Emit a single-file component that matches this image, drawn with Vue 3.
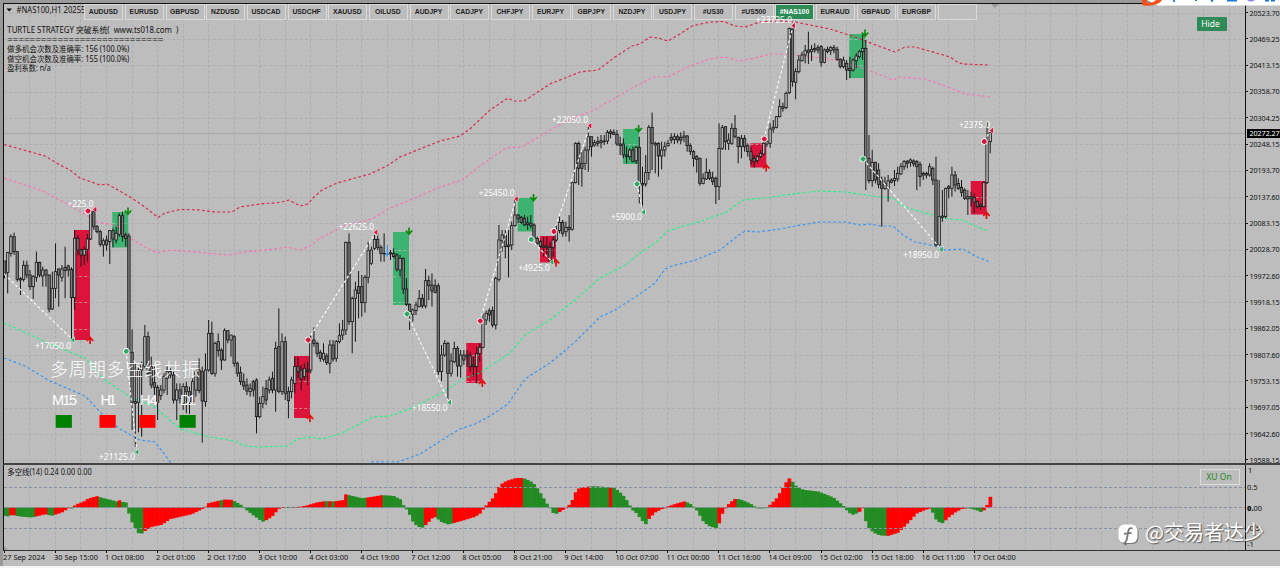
<template>
  <div class="terminal">
    <div class="chart-row">
      <svg class="plot" width="1241" height="459" viewBox="4 4 1241 459">
        <g class="grid">
          <line v-for="x in gridX" :key="'x' + x" :x1="x" :x2="x" y1="4" y2="463" />
          <line v-for="y in gridY" :key="'y' + y" :y1="y" :y2="y" x1="4" x2="1245" />
        </g>

        <line class="price-line" x1="4" x2="1245" y1="133.5" y2="133.5" />

        <g v-for="(b, i) in boxes" :key="'b' + i">
          <rect :x="b[1]" :y="b[2]" :width="16" :height="b[3] - b[2]" :class="b[0] === 'buy' ? 'box-red' : 'box-green'" />
          <line
            v-for="y in gridY.filter(g => g > b[2] && g < b[3])"
            :key="y"
            class="box-grid"
            :x1="b[1]"
            :x2="b[1] + 16"
            :y1="y"
            :y2="y"
          />
        </g>

        <polyline v-for="band in bands" :key="band.color" class="band" :points="band.points" :stroke="band.color" />

        <g v-for="(c, i) in candles" :key="'c' + i" :class="['candle', c.up ? 'up' : 'down', { blue: i === 120 }]">
          <line :x1="c.x" :x2="c.x" :y1="c.high" :y2="c.low" />
          <rect :x="c.x - 1.2" :y="c.top" width="2.4" :height="c.height" />
        </g>

        <line v-for="(t, i) in trades" :key="'t' + i" class="trade" :x1="t[0]" :y1="t[1]" :x2="t[2]" :y2="t[3]" />

        <path
          v-for="(a, i) in arrows"
          :key="'a' + i"
          :class="a[0]"
          :transform="`translate(${a[1]} ${a[2]})${a[0] === 'arrow-down' ? ' rotate(180)' : ''}`"
          d="M0 4V-3M-3.2 1L0 -2.6L3.2 1"
        />
        <path
          v-for="(d, i) in entries"
          :key="'d' + i"
          :class="['entry', d[0]]"
          :transform="`translate(${d[1]} ${d[2]})`"
          d="M-.8 -2.4H.8L2.4 -.8V.8L.8 2.4H-.8L-2.4 .8V-.8Z"
        />
        <path
          v-for="(e, i) in exits"
          :key="'e' + i"
          :class="['exit', e[0]]"
          :transform="`translate(${e[1]} ${e[2]})`"
          d="M-2.2 0L1.5 -3V3Z"
        />

        <path d="M6.5 8.5H12L9.2 11.6Z" fill="#111" />
        <path d="M991 4H999L995 8Z" fill="#999" />
        <text class="info" x="16.5" y="13" textLength="69" lengthAdjust="spacingAndGlyphs">#NAS100,H1  20255</text>
        <text
          v-for="line in info"
          :key="line[0]"
          class="info"
          x="7.3"
          :y="line[2]"
          :textLength="line[1]"
          lengthAdjust="spacingAndGlyphs"
        >{{ line[0] }}</text>

        <text class="resonance" x="50" y="375.5" textLength="150">多周期多空线共振</text>
        <g v-for="s in signals" :key="s[0]">
          <text class="period" :x="s[1]" y="405" :textLength="s[2]">{{ s[0] }}</text>
          <rect :x="s[3]" y="415" width="16.2" height="12.8" :fill="s[4]" />
        </g>
      </svg>

      <div class="price-axis">
        <span v-for="p in prices" :key="p">{{ p }}</span>
        <b class="price-tag">20272.27</b>
      </div>

      <div class="symbols">
        <button v-for="s in symbols" :key="s" :class="{ active: s === '#NAS100' }">{{ s }}</button>
      </div>

      <svg class="overlay" width="1241" height="459" viewBox="4 4 1241 459">
        <text
          v-for="p in profits"
          :key="p[0]"
          class="profit"
          :x="p[1]"
          :y="p[3] + 3"
          :textLength="p[2] - p[1]"
          lengthAdjust="spacingAndGlyphs"
        >{{ p[0] }}</text>
      </svg>
      <button class="hide-btn">Hide</button>
    </div>

    <div class="indicator-row">
      <svg class="plot" width="1241" height="85" viewBox="4 465 1241 85">
        <g class="grid">
          <line v-for="x in gridX" :key="x" :x1="x" :x2="x" y1="465" y2="550" />
        </g>
        <rect
          v-for="(h, i) in histogram"
          :key="i"
          :x="h.x"
          :y="h.y"
          width="3.7"
          :height="h.height"
          :fill="h.color"
        />
        <line v-for="y in [487.5, 507.5, 528.5]" :key="y" class="level" x1="4" x2="1245" :y1="y" :y2="y" />
        <text class="info" x="7.3" y="474.5" textLength="84.5" lengthAdjust="spacingAndGlyphs">多空线(14) 0.24 0.00 0.00</text>
        <path d="M4 546L8 550H4Z" fill="#999" />
      </svg>
      <div class="level-axis">
        <span class="one">1</span>
        <span class="half">0.5</span>
        <span class="zero">0.00</span>
        <span class="minus-half">-0.5</span>
        <span class="minus-one">-1</span>
      </div>
      <button class="xu-btn">XU On</button>
    </div>

    <div class="time-axis">
      <span v-for="t in times" :key="t">{{ t }}</span>
    </div>

    <div class="floating-bar">
      <svg width="138" height="6" viewBox="0 0 138 6">
        <path d="M5 0H138V5.6H16Z" fill="#fff" />
        <path d="M0 0C0 3 0 5.5 2 5.7C9 6 17 5 20 0H14C11 3 8 3 5 2.5V0Z" fill="#f4511e" />
        <path d="M32 0V2M53 0H55M69 0L71 1.5M85 .5H95" stroke="#1e78d6" stroke-width="1.8" />
        <path d="M105 0Q109 3 113 0Z" fill="#8a84f5" />
        <path d="M123 0H127V1.5H123ZM129 0H133V1.5H129Z" fill="#1976d2" />
      </svg>
    </div>

    <div class="watermark">
      <svg width="20" height="21" viewBox="0 0 20 21">
        <rect x=".5" y=".5" width="19" height="18.5" rx="6" fill="#fff" />
        <path d="M14.5 4.3C11.3 3.6 10.5 5.4 10.1 8L9.2 13.5C8.8 16.5 8 18.5 5.7 20M6 9.8L13.5 8.8" fill="none" stroke="#777" stroke-width="1.8" />
      </svg>
      <span>@交易者达少</span>
    </div>
  </div>
</template>

<script setup>
const STEP = 3.19
const X0 = 4.5

const symbols = [
  'AUDUSD', 'EURUSD', 'GBPUSD', 'NZDUSD', 'USDCAD', 'USDCHF', 'XAUUSD', 'OILUSD', 'AUDJPY', 'CADJPY', 'CHFJPY',
  'EURJPY', 'GBPJPY', 'NZDJPY', 'USDJPY', '#US30', '#US500', '#NAS100', 'EURAUD', 'GBPAUD', 'EURGBP', ''
]
const prices = [
  '20523.70', '20469.25', '20413.15', '20358.70', '20304.25', '20248.15', '20193.70', '20137.60', '20083.15',
  '20028.70', '19972.60', '19918.15', '19862.05', '19807.60', '19753.15', '19697.05', '19642.60', '19588.15'
]
const times = [
  '27 Sep 2024', '30 Sep 15:00', '1 Oct 08:00', '2 Oct 01:00', '2 Oct 17:00', '3 Oct 10:00', '4 Oct 03:00',
  '4 Oct 19:00', '7 Oct 12:00', '8 Oct 05:00', '8 Oct 21:00', '9 Oct 14:00', '10 Oct 07:00', '11 Oct 00:00',
  '11 Oct 16:00', '14 Oct 09:00', '15 Oct 02:00', '15 Oct 18:00', '16 Oct 11:00', '17 Oct 04:00'
]
// text, width, baseline
const info = [
  ['TURTLE STRATEGY 突破系统(  www.ts018.com  )', 171, 33],
  ['============================', 156, 43],
  ['做多机会次数及准确率: 156 (100.0%)', 122, 52],
  ['做空机会次数及准确率: 155 (100.0%)', 122, 61.5],
  ['盈利系数: n/a', 43.5, 71]
]
const signals = [
  ['M15', 52, 25, 55.7, '#008000'],
  ['H1', 100.5, 16, 99.5, '#ff0000'],
  ['H4', 140, 17.5, 139.3, '#ff0000'],
  ['D1', 180, 16, 179.5, '#008000']
]

const gridX = Array.from({ length: 48 }, (_, i) => Math.floor(4.4 + 25.52 * (i + 1)) + 0.5)
const gridY = Array.from({ length: 18 }, (_, i) => Math.round(12.7 + 26.32 * i) + 0.5)

const boxes = [
  ['buy', 74, 230, 340], ['sell', 112.3, 212, 247.5], ['buy', 294, 356, 418], ['sell', 393, 232, 305],
  ['buy', 466.3, 343, 383], ['sell', 517.7, 198, 231.5], ['buy', 540, 236, 262.5], ['sell', 623, 129, 164],
  ['buy', 750.3, 143.3, 167.5], ['sell', 849.3, 34, 78], ['buy', 970.7, 181, 214.5]
]
const arrows = [
  ['arrow-down', 128, 211.5], ['arrow-down', 409, 231.5], ['arrow-down', 533.5, 198], ['arrow-down', 638.7, 129],
  ['arrow-down', 865, 33.5], ['arrow-up', 90, 340], ['arrow-up', 310, 418], ['arrow-up', 482.3, 383],
  ['arrow-up', 556, 262.5], ['arrow-up', 766.2, 167.5], ['arrow-up', 986.5, 215]
]
const entries = [
  ['red', 88, 211], ['red', 308.2, 340], ['red', 480.3, 321], ['red', 554, 231.5], ['red', 764.3, 139],
  ['red', 984.3, 141.5], ['green', 126.3, 351.3], ['green', 407, 314], ['green', 531.3, 239.5],
  ['green', 637, 184], ['green', 863, 159]
]
const exits = [
  ['red', 95, 209.5], ['red', 376, 232.3], ['red', 516.3, 199], ['red', 590, 125.7], ['red', 793.5, 25.7],
  ['red', 991.7, 130.5], ['green', 73, 340], ['green', 137, 452], ['green', 449.5, 402.5], ['green', 552, 262.3],
  ['green', 643.5, 212], ['green', 941.3, 249.5]
]
const trades = [
  [4, 274, 73, 340], [126, 351, 137, 452], [308, 340, 376, 232], [407, 314, 449, 402], [480, 321, 516, 199],
  [531, 239, 552, 262], [554, 231, 590, 126], [637, 184, 643, 212], [764, 139, 793, 26], [863, 159, 941, 249],
  [984, 141, 991, 130]
]
const profits = [
  ['+225.0', 67.5, 93.5, 203.7], ['+17050.0', 35, 71, 345.5], ['+21125.0', 99, 135, 457], ['+22625.0', 338.5, 374, 226.7],
  ['+18550.0', 412, 447.5, 407.7], ['+25450.0', 478.7, 514.5, 193.3], ['+4925.0', 518.3, 550, 268],
  ['+22050.0', 552, 588, 119.7], ['+5900.0', 611, 642, 217], ['+23725.0', 756, 792, 20], ['+2375.0', 959, 990, 124.7],
  ['+18950.0', 903, 939, 254.7]
]

const bands = [
  {
    color: '#dc143c',
    points: '4,144.5 20,149 45,156 60,165 70,170 80,178 100,185 107,184 118,190 130,197 145,207 158,217.5 165,213 180,209.5 200,210 215,212 232,212 240,207 260,204 280,202.5 289,200 300,206 308,204 313,198 322,190 337,183 370,174 387,166 400,157 425,147 440,141 460,136 470,129 490,110 508,98 514,101 524,101 550,84 580,72 598,70 615,57 632,46 640,44 650,37 658,38 668,41 680,34 692,26 710,22 724,21.5 735,26 745,27 760,22 780,21 795,22 830,29 855,37 873,44 895,52 905,47 915,47 940,54 950,57 957,62 963,64 988,65'
  },
  {
    color: '#ff69b4',
    points: '4,178 25,185 45,192 57,199 70,205 97,222 115,225 130,238 145,247 157,253 170,250 195,252 215,254 230,255 245,252 275,249 287,247 300,250 310,246 320,238 330,233 345,225 360,222 372,219 390,208 415,198 440,187 462,180 480,166 506,148 522,147 550,130 575,117 590,112 610,101 630,89 640,84 653,77 668,77 690,66 710,59 725,57 740,61 755,58 770,54 790,54 805,56 835,60 850,64 870,71 893,80 900,77 925,79 945,86 965,94 975,95 990,97'
  },
  {
    color: '#00ff7f',
    points: '4,323 20,330 45,342 85,358 105,380 130,397 155,407 165,416 180,429 210,437 235,441 245,446 260,447 288,446 297,439 310,437 322,439 340,434 373,417 390,416 412,408 440,394 465,378 480,373 510,353 525,335 550,320 575,300 600,278 625,265 640,253 655,243 668,231 680,227 695,223 725,213 743,200 765,198 800,193 820,191 845,192 880,197 893,198 905,207 940,217 950,219 963,220 975,226 988,231'
  },
  {
    color: '#1e90ff',
    points: '4,358 25,366 50,381 85,396 105,417 120,429 140,440 155,442 165,455 171,463'
  },
  {
    color: '#1e8fff',
    points: '371,462 398,462 420,454 445,438 460,429 475,424 490,416 508,404 525,379 550,363 575,342 600,317 615,310 640,294 655,283 665,269 675,265 693,261 720,250 735,238 745,231 758,232 780,229 795,226 820,222 845,222 860,225 870,224 880,226 893,226 903,235 915,242 940,247 945,250 963,249 975,256 990,262'
  }
]

// Each bar is [high, open, close, low] in thirds of a pixel below the segment base
const segments = [
  {
    base: 570,
    bars: [
      [213, 213, 255, 265], [187, 247, 187, 310], [133, 190, 140, 200], [128, 140, 185, 195], [183, 185, 268, 275],
      [262, 266, 270, 315], [212, 268, 226, 275], [212, 226, 255, 265], [240, 255, 290, 300], [255, 290, 260, 327],
      [185, 262, 217, 275], [215, 217, 255, 262], [230, 258, 240, 290], [238, 240, 255, 290], [253, 255, 357, 367],
      [245, 357, 295, 360], [160, 295, 245, 325], [235, 237, 255, 350], [225, 262, 237, 275], [170, 232, 242, 325],
      [224, 228, 240, 260], [232, 238, 323, 450], [120, 323, 145, 360], [135, 145, 180, 195], [175, 180, 195, 230],
      [170, 195, 178, 225], [132, 178, 147, 215], [62, 147, 65, 150], [62, 65, 110, 120], [105, 110, 125, 130],
      [120, 125, 163, 170], [145, 165, 152, 200], [137, 150, 165, 182], [120, 155, 122, 222], [115, 122, 147, 172],
      [110, 150, 130, 160], [70, 133, 77, 140], [65, 77, 140, 155], [128, 135, 145, 170], [130, 138, 487, 490],
      [418, 487, 637, 720], [520, 635, 640, 770], [530, 637, 540, 727], [515, 540, 525, 740], [405, 530, 440, 535],
      [425, 440, 550, 560], [500, 530, 585, 595], [530, 578, 592, 620], [585, 592, 637, 690], [585, 617, 600, 630],
      [550, 600, 560, 610], [530, 565, 545, 615], [535, 545, 555, 565], [545, 555, 630, 640], [580, 630, 600, 690],
      [580, 600, 625, 640], [580, 640, 590, 660], [575, 590, 605, 670], [590, 605, 635, 672], [565, 635, 575, 645],
      [540, 600, 545, 620], [505, 540, 602, 610], [530, 545, 633, 758], [490, 635, 540, 650], [390, 540, 430, 545],
      [395, 430, 550, 555], [455, 550, 460, 560], [430, 455, 482, 500], [475, 480, 510, 540], [415, 510, 422, 512],
      [420, 422, 450, 460], [435, 450, 435, 500], [435, 440, 520, 530], [515, 520, 550, 560], [530, 548, 575, 585],
      [550, 575, 588, 600], [565, 585, 603, 615], [580, 605, 595, 620], [570, 575, 600, 620], [565, 570, 680, 730],
      [620, 680, 640, 685], [590, 640, 620, 655], [570, 595, 630, 645], [560, 600, 570, 610], [545, 565, 600, 610],
      [455, 600, 475, 665], [355, 470, 605, 610], [430, 605, 455, 615], [440, 455, 610, 630], [590, 605, 632, 685],
      [560, 605, 570, 625], [500, 580, 530, 610], [500, 530, 545, 565], [525, 540, 567, 600], [520, 560, 535, 570],
      [515, 540, 545, 585], [435, 540, 450, 550], [412, 450, 460, 470], [455, 460, 490, 500], [480, 487, 505, 515],
      [460, 508, 490, 515], [490, 498, 518, 525], [450, 520, 465, 550], [450, 465, 507, 515], [450, 505, 455, 515],
      [400, 455, 437, 460], [390, 435, 420, 450], [155, 420, 157, 435], [130, 157, 395, 405], [320, 395, 325, 490],
      [275, 325, 300, 455], [243, 290, 310, 385], [255, 290, 338, 380], [255, 338, 262, 368], [155, 262, 182, 280],
      [170, 220, 180, 225], [135, 175, 148, 180], [130, 148, 172, 180], [165, 172, 190, 215], [130, 190, 192, 215],
      [165, 192, 194, 200], [180, 188, 192, 210], [175, 190, 200, 205], [190, 195, 238, 245], [195, 240, 205, 262],
      [203, 205, 297, 312], [265, 297, 343, 348], [340, 343, 365, 420], [355, 373, 360, 395], [335, 362, 345, 375],
      [300, 350, 325, 352], [312, 325, 348, 355], [237, 348, 272, 355], [257, 272, 287, 330], [250, 285, 303, 350],
      [268, 287, 307, 310], [280, 287, 545, 555], [465, 545, 495, 573], [450, 495, 460, 500], [455, 460, 550, 630],
      [490, 550, 513, 560], [455, 515, 475, 520], [468, 475, 528, 560], [480, 528, 495, 563], [480, 495, 510, 525],
      [480, 495, 500, 530], [485, 497, 530, 545], [500, 525, 530, 560], [470, 530, 490, 580], [460, 490, 472, 515],
      [370, 472, 390, 475], [362, 390, 370, 405], [355, 362, 375, 395], [350, 362, 405, 412], [260, 405, 265, 418],
      [105, 268, 150, 275], [120, 152, 135, 185], [120, 135, 170, 205], [120, 165, 170, 262], [95, 165, 107, 180],
      [30, 107, 75, 110], [72, 75, 85, 100], [78, 82, 97, 102], [75, 85, 105, 108], [80, 98, 103, 120],
      [75, 100, 107, 115], [100, 105, 145, 150], [140, 145, 160, 165], [150, 155, 170, 175], [140, 168, 172, 200],
      [140, 168, 172, 200], [155, 172, 212, 215], [140, 172, 150, 200], [100, 150, 122, 155], [80, 122, 97, 130],
      [90, 97, 130, 140], [95, 125, 112, 140], [75, 112, 118, 155], [-25, 118, -22, 122]
    ]
  },
  {
    base: 0,
    bars: [
      [427, 548, 430, 550], [425, 430, 505, 555], [450, 490, 505, 560], [440, 490, 450, 510], [380, 450, 410, 515],
      [410, 410, 440, 470], [420, 435, 428, 440], [410, 425, 430, 440], [405, 422, 428, 445], [405, 423, 425, 435],
      [390, 423, 397, 432], [388, 395, 400, 415], [388, 397, 403, 405], [390, 403, 432, 438], [410, 432, 437, 465],
      [415, 432, 465, 475], [440, 465, 470, 490], [445, 470, 450, 480], [440, 450, 485, 487], [438, 482, 442, 492],
      [410, 442, 550, 610], [500, 550, 555, 622], [465, 552, 518, 560], [375, 518, 382, 540], [338, 382, 430, 510],
      [425, 430, 435, 520], [427, 430, 468, 530], [425, 468, 450, 508], [425, 450, 440, 470], [420, 437, 430, 440],
      [400, 412, 420, 430], [400, 418, 410, 432], [403, 410, 420, 430], [397, 412, 420, 433], [393, 412, 408, 427],
      [405, 408, 437, 455], [430, 437, 455, 465], [450, 455, 475, 500], [465, 470, 478, 518], [473, 475, 550, 557],
      [520, 550, 535, 553], [475, 537, 517, 540], [508, 517, 535, 540], [515, 533, 545, 555], [530, 535, 560, 612],
      [370, 560, 445, 600], [375, 445, 383, 450], [380, 380, 425, 450], [400, 430, 420, 450], [370, 430, 385, 435],
      [345, 385, 410, 415], [410, 412, 440, 490], [405, 440, 415, 475], [405, 415, 440, 455], [430, 437, 455, 470],
      [440, 455, 480, 495], [465, 475, 485, 503], [465, 482, 470, 490], [450, 470, 460, 475], [415, 462, 430, 465],
      [415, 432, 425, 440], [370, 430, 387, 443], [360, 387, 382, 398], [348, 382, 350, 385], [298, 350, 320, 352],
      [308, 320, 325, 335], [275, 323, 280, 328], [83, 278, 85, 282], [80, 87, 245, 260], [205, 247, 215, 298],
      [165, 215, 180, 220], [155, 182, 165, 185], [135, 165, 152, 190], [95, 150, 157, 192], [135, 155, 148, 183],
      [130, 145, 150, 158], [135, 143, 150, 160], [135, 140, 187, 200], [145, 187, 150, 190], [140, 148, 155, 160],
      [138, 152, 143, 165], [135, 143, 150, 160], [140, 148, 178, 182], [175, 178, 200, 205], [170, 200, 180, 205],
      [180, 190, 210, 240], [170, 205, 212, 235], [175, 210, 180, 215], [160, 182, 168, 205], [150, 170, 155, 175],
      [105, 155, 145, 180], [120, 145, 475, 570], [405, 475, 542, 550], [450, 542, 487, 560], [485, 487, 540, 550],
      [490, 510, 553, 565], [530, 540, 565, 680], [530, 565, 550, 570], [525, 565, 543, 605], [535, 540, 547, 550],
      [510, 542, 535, 558], [500, 537, 520, 545], [490, 522, 500, 525], [480, 500, 485, 510], [480, 484, 490, 505],
      [475, 487, 480, 500], [478, 483, 492, 500], [480, 485, 500, 570], [485, 493, 530, 560], [515, 520, 525, 540],
      [515, 525, 520, 535], [490, 525, 500, 530], [500, 505, 540, 555], [470, 540, 735, 740], [540, 735, 650, 742],
      [570, 648, 652, 665], [563, 650, 565, 655], [555, 560, 565, 595], [500, 565, 525, 590], [513, 525, 555, 575],
      [535, 550, 565, 570], [540, 562, 577, 590], [565, 570, 595, 600], [570, 590, 597, 645], [575, 590, 595, 620],
      [580, 592, 607, 640], [600, 605, 620, 625], [610, 615, 620, 630], [545, 620, 548, 622], [365, 548, 425, 552],
      [390, 425, 397, 460]
    ]
  }
]

const candles = segments
  .flatMap(s => s.bars.map(bar => bar.map(v => (v + s.base) / 3)))
  .map(([high, open, close, low], i) => ({
    x: +(X0 + STEP * i).toFixed(2),
    high,
    low,
    top: Math.min(open, close),
    height: Math.max(Math.abs(open - close), 0.6),
    up: close < open
  }))

// Oscillator outline: position and value, thirds of a pixel
const profile = [
  13, -25, 25, -27, 35, -22, 60, -27, 95, -30, 120, -24, 135, -20, 155, -25, 185, -15, 205, -2, 215, -3, 222, 5,
  235, 12, 250, 17, 265, 27, 290, 34, 310, 28, 335, 22, 350, 18, 357, 22, 365, 17, 378, 15, 384, -10, 395, -42,
  405, -60, 415, -77, 427, -78, 435, -70, 455, -58, 485, -52, 510, -35, 540, -28, 575, -20, 600, -8, 615, 0,
  622, 12, 650, 19, 675, 24, 695, 23, 710, 15, 730, 3, 740, -8, 755, -20, 780, -38, 790, -43, 815, -28, 835, -5,
  845, 1, 900, 2, 920, 6, 950, 15, 975, 19, 1000, 18, 1028, 22, 1034, 40, 1060, 34, 1085, 28, 1110, 31, 1145, 37,
  1180, 35, 1200, 25, 1212, 3, 1225, -12, 1235, -38, 1250, -55, 1265, -62, 1280, -50, 1295, -33, 1308, -28,
  1320, -42, 1345, -51, 1385, -40, 1425, -28, 1440, -18, 1452, -2, 1460, 8, 1480, 30, 1490, 48, 1500, 68,
  1520, 80, 1550, 89, 1570, 88, 1590, 80, 1605, 68, 1620, 45, 1640, 12, 1650, -2, 1657, -15, 1667, -20, 1685, -10,
  1700, 2, 1710, 10, 1720, 28, 1730, 55, 1750, 61, 1780, 64, 1820, 61, 1840, 60, 1855, 50, 1870, 35, 1885, 15,
  1895, -6, 1910, -18, 1925, -38, 1937, -50, 1948, -32, 1965, -15, 1990, -2, 2000, 2, 2030, 12, 2055, 19, 2075, 8,
  2088, -5, 2100, -25, 2110, -42, 2125, -55, 2150, -63, 2157, -48, 2166, -20, 2178, 0, 2190, 15, 2207, 27,
  2225, 23, 2250, 12, 2265, 2, 2280, -3, 2300, 0, 2315, 12, 2330, 28, 2348, 58, 2366, 89, 2375, 80, 2390, 62,
  2410, 53, 2455, 48, 2475, 40, 2500, 30, 2530, 5, 2545, -15, 2560, -22, 2580, -12, 2588, -2, 2595, -35,
  2605, -60, 2620, -75, 2640, -84, 2665, -85, 2695, -75, 2720, -50, 2750, -18, 2775, -7, 2795, -2, 2802, -30,
  2815, -43, 2828, -47, 2845, -30, 2865, -15, 2885, -4, 2905, -2, 2930, -8, 2945, -15, 2950, -12, 2958, 7,
  2963, 8, 2970, 32, 2980, 32
]
// Colour flips between falling (green) and rising (red) at each position
const flips = [
  25, 45, 103, 142, 161, 205, 219, 295, 352, 361, 429, 657, 667, 697, 792, 865, 880, 975, 984, 993, 1002, 1041,
  1097, 1145, 1270, 1308, 1356, 1566, 1672, 1767, 1825, 1835, 1940, 2056, 2151, 2208, 2305, 2370, 2571, 2590,
  2658, 2790, 2831, 2895, 2945
]

function valueAt(x) {
  for (let i = 2; i < profile.length; i += 2) {
    if (x <= profile[i]) {
      const t = (x - profile[i - 2]) / (profile[i] - profile[i - 2])
      return profile[i - 1] + t * (profile[i + 1] - profile[i - 1])
    }
  }
  return profile[profile.length - 1]
}

const histogram = candles.map(c => {
  const x = Math.max(c.x * 3, 13)
  const v = valueAt(x) / 3
  const flipped = flips.filter(f => f <= x).length
  return {
    x: c.x - 1.7,
    y: v > 0 ? 507.5 - v : 507.5,
    height: Math.max(Math.abs(v), 0.8),
    color: flipped % 2 ? '#ff0000' : '#228b22'
  }
})
</script>

<style>
body {
  margin: 0;
  background: #fff;
}
</style>

<style scoped>
.terminal {
  position: relative;
  box-sizing: border-box;
  width: 1280px;
  height: 568px;
  padding: 3px 0 0 3px;
  overflow: hidden;
  background: #bdbdbd;
  border-bottom: 2px solid #f4f4f4;
  font-family: 'Noto Sans', 'Noto Sans CJK SC', sans-serif;
  color: #111;
  box-shadow: inset 3px 3px 0 #999;
}
.plot {
  display: block;
  flex: none;
  border-right: 1px solid #111;
}
.overlay {
  position: absolute;
  top: 0;
  left: 0;
  pointer-events: none;
}
.chart-row {
  position: relative;
  display: flex;
  height: 459px;
  border-top: 1px solid #111;
  border-left: 1px solid #111;
  border-bottom: 2px solid #444;
}
.grid line {
  stroke: #aeaeae;
  stroke-width: 1;
  stroke-dasharray: 3 2.1;
}
.box-red { fill: #dc143c; }
.box-green { fill: #3cb371; }
.box-grid {
  stroke: #ccc;
  stroke-width: 0.8;
  stroke-dasharray: 3 2.1;
  opacity: 0.7;
}
.band {
  fill: none;
  stroke-width: 1.15;
  stroke-dasharray: 2.8 2.3;
  opacity: 0.88;
}
.candle line {
  stroke: #161616;
  stroke-width: 1;
}
.candle rect {
  stroke: #161616;
  stroke-width: 0.8;
}
.candle.up rect { fill: #b4b4b4; }
.candle.down rect { fill: #777; }
.candle.blue line,
.candle.blue rect { stroke: #1e90ff; }
.price-line { stroke: #a8a8a8; stroke-width: 1; }
.trade {
  stroke: #fff;
  stroke-width: 1.1;
  stroke-dasharray: 3 2.2;
}
.arrow-down,
.arrow-up {
  fill: none;
  stroke-width: 1.7;
}
.arrow-down { stroke: #0a8c0a; }
.arrow-up { stroke: #e01010; }
.entry,
.exit {
  stroke: #fff;
  stroke-width: 1.8;
  paint-order: stroke;
}
.exit { stroke-width: 1; }
.red { fill: #dc143c; }
.green { fill: #2ea866; }
.profit {
  font-size: 8.8px;
  fill: #fff;
}
.info {
  font-size: 8px;
  fill: #111;
  white-space: pre;
}
.resonance {
  font-family: 'Noto Sans CJK SC', sans-serif;
  font-weight: 300;
  font-size: 18px;
  fill: #fff;
}
.period {
  font-family: 'Liberation Sans', Arial, sans-serif;
  font-size: 14.5px;
  fill: #fff;
}
.price-axis {
  position: relative;
  display: flex;
  flex-direction: column;
  justify-content: space-between;
  height: 461px;
  padding: 3.5px 0 0;
  box-sizing: border-box;
}
.price-axis span {
  display: flex;
  align-items: center;
  height: 10px;
  font-size: 7.2px;
  line-height: 10px;
  letter-spacing: -0.08px;
}
.price-axis span::before {
  content: '';
  width: 2px;
  height: 1px;
  margin-right: 1.5px;
  background: #111;
}
.price-tag {
  position: absolute;
  top: 125px;
  left: 1px;
  width: 34px;
  height: 9px;
  padding-left: 2.5px;
  box-sizing: border-box;
  background: #000;
  color: #fff;
  font-size: 7.2px;
  font-weight: 400;
  line-height: 9px;
  letter-spacing: -0.08px;
}
.symbols {
  position: absolute;
  top: 0;
  left: 80.3px;
  display: flex;
  gap: 1.67px;
}
.symbols button {
  width: 39px;
  height: 16px;
  padding: 0 1px 0 0;
  background: #bdbdbd;
  border: 1px solid #dadada;
  font: bold 6.8px/14px 'Liberation Sans', Arial, sans-serif;
  color: #222;
}
.symbols button.active {
  background: #2e8b57;
  color: #fff;
}
.hide-btn {
  position: absolute;
  top: 13px;
  left: 1193px;
  width: 30px;
  height: 14px;
  padding: 0 3px 0 0;
  background: #2e8b57;
  border: 0;
  color: #fff;
  font: 8.5px/14px 'Noto Sans', sans-serif;
}
.indicator-row {
  position: relative;
  display: flex;
  height: 85px;
  border-left: 1px solid #111;
  border-bottom: 1px solid #333;
}
.level {
  stroke: #8492a3;
  stroke-width: 1;
  stroke-dasharray: 3 2;
}
.level-axis {
  display: flex;
  flex-direction: column;
  height: 85px;
  padding-left: 1px;
  box-sizing: border-box;
}
.level-axis span {
  flex: none;
  height: 10px;
  font-size: 7.5px;
  line-height: 10px;
}
.level-axis .one { padding-left: 1px; }
.level-axis .half { margin-top: 7px; }
.level-axis .zero,
.level-axis .minus-half { margin-top: 10.5px; }
.level-axis .minus-one { margin-top: 6px; }
.level-axis .zero::first-letter { font-weight: 900; }
.xu-btn {
  position: absolute;
  top: 4px;
  left: 1196px;
  width: 40px;
  height: 16px;
  padding: 0 2px 0 0;
  background: #bdbdbd;
  border: 1px solid #dcdcdc;
  color: #228b22;
  font: 8.5px/14px 'Noto Sans', sans-serif;
}
.time-axis {
  display: flex;
  height: 14px;
}
.time-axis span {
  position: relative;
  flex: none;
  width: 51.04px;
  font-size: 7.4px;
  line-height: 13px;
  white-space: nowrap;
}
.time-axis span::before {
  content: '';
  position: absolute;
  top: 0;
  left: 1px;
  width: 1px;
  height: 2px;
  background: #111;
}
.floating-bar {
  position: absolute;
  top: 0;
  left: 1142px;
}
.floating-bar svg { display: block; }
.watermark {
  position: absolute;
  left: 1118px;
  top: 518px;
  display: flex;
  align-items: center;
  gap: 7px;
  height: 28px;
  font-family: 'Noto Sans CJK SC', sans-serif;
  font-size: 20px;
  line-height: 28px;
  color: #fff;
  white-space: nowrap;
  text-shadow: 1px 1px 1px #555;
}
.watermark svg {
  margin-top: 4px;
  filter: drop-shadow(1px 1px 0.5px #777);
}
</style>
